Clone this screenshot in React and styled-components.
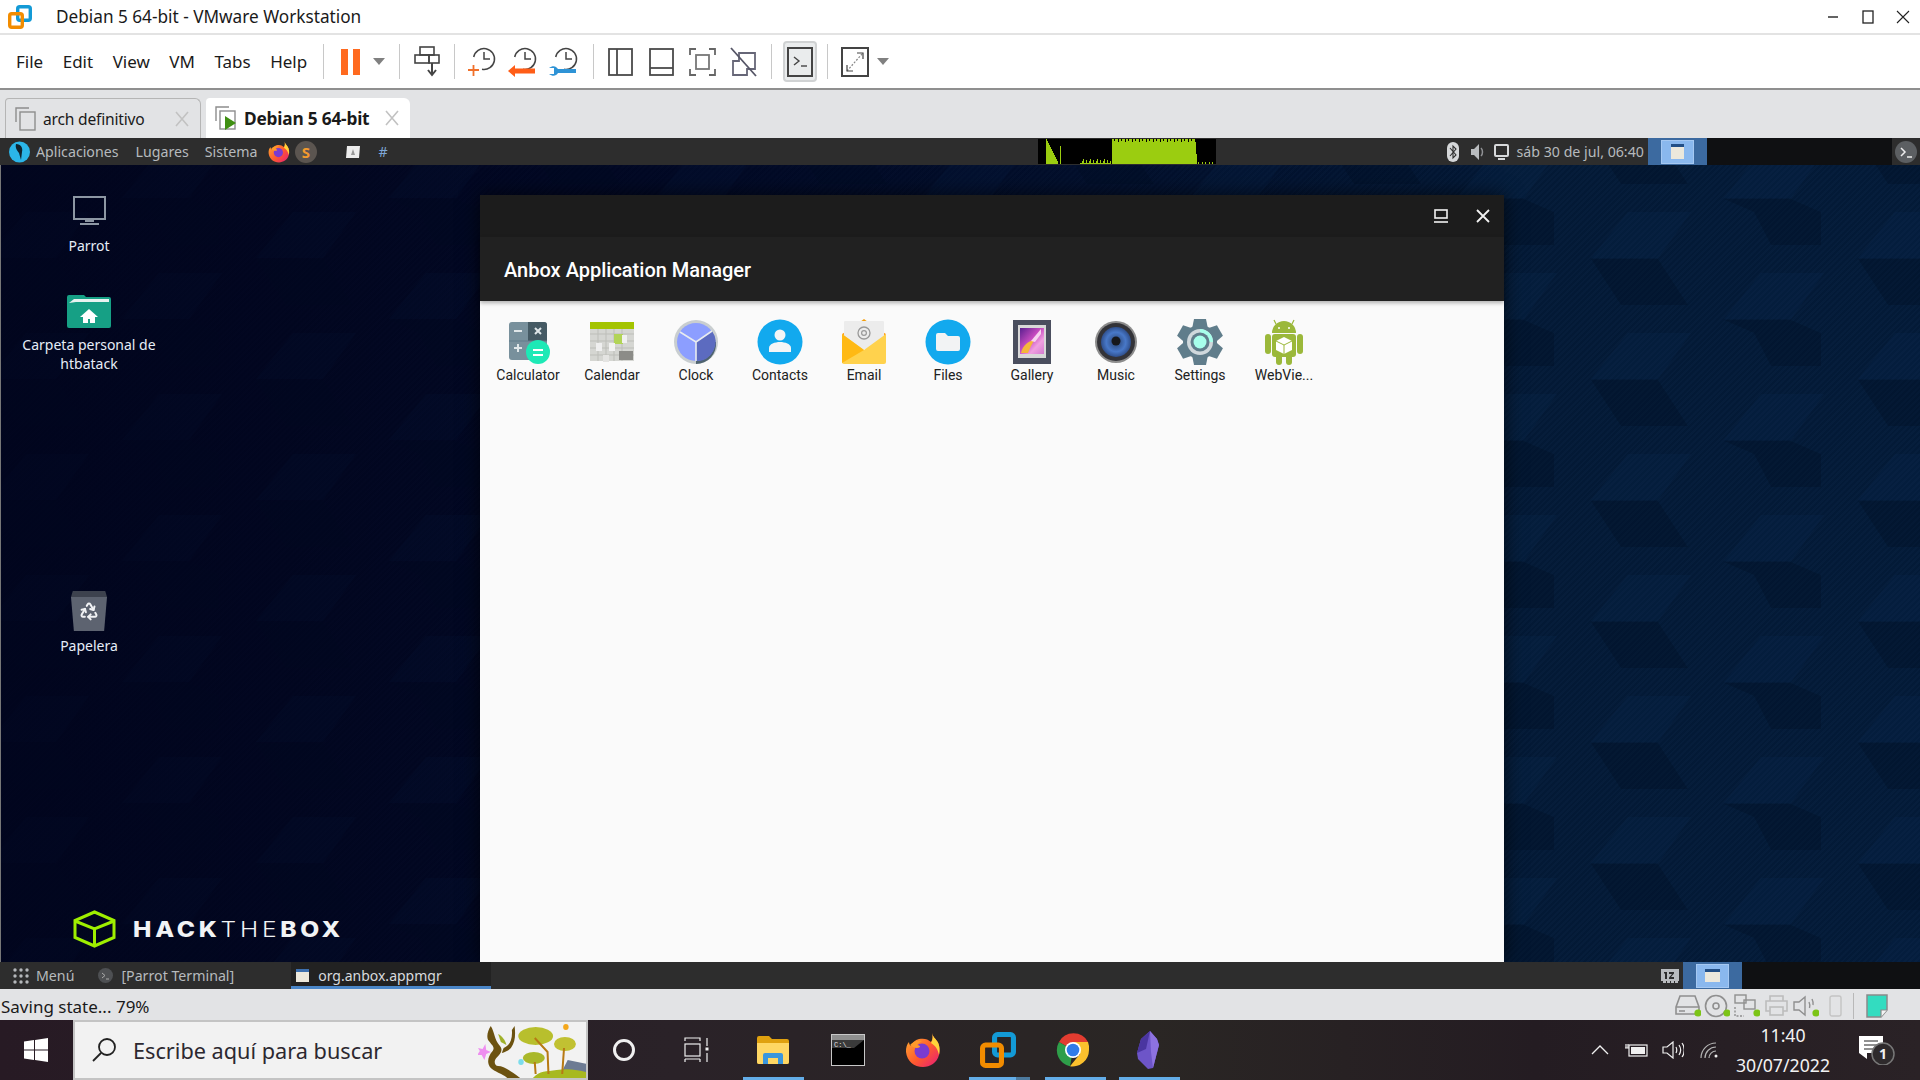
import styled, { createGlobalStyle } from "styled-components";
import { Recycle } from "lucide-react";

const GlobalStyle = createGlobalStyle`
  html, body {
    margin: 0;
    padding: 0;
    width: 1920px;
    height: 1080px;
    overflow: hidden;
    font-family: "Noto Sans", "Liberation Sans", sans-serif;
  }
  * { box-sizing: border-box; }
  svg { display: block; flex: none; }
`;

const Page = styled.div`
  width: 1920px;
  height: 1080px;
  display: flex;
  flex-direction: column;
  background: #e2e3e5;
`;

/* ---------- vmware chrome ---------- */

const TitleBar = styled.div`
  height: 35px;
  flex: none;
  display: flex;
  align-items: center;
  padding-left: 8px;
  background: #fff;
  border-bottom: 2px solid #e3e3e3;
`;

const TitleText = styled.span`
  margin-left: 24px;
  font-size: 17.2px;
  color: #1a1a1a;
  white-space: nowrap;
`;

const WinButtons = styled.div`
  margin-left: auto;
  display: flex;
`;

const WinButton = styled.div`
  width: 35px;
  height: 32px;
  display: flex;
  align-items: center;
  justify-content: center;
`;

const Toolbar = styled.div`
  height: 55px;
  flex: none;
  display: flex;
  align-items: center;
  background: #fff;
  border-bottom: 2px solid #8f8f8f;
`;

const MenuGroup = styled.div`
  width: 323px;
  padding-left: 16px;
  display: flex;
  gap: 19.5px;
  font-size: 17px;
  color: #1a1a1a;
`;

const Sep = styled.div`
  width: 1px;
  height: 35px;
  flex: none;
  background: #c8c8c8;
`;

const ToolGroup = styled.div`
  width: ${(p) => p.$w}px;
  flex: none;
  display: flex;
  align-items: center;
  justify-content: center;
  gap: ${(p) => p.$gap || 0}px;
`;

const ToolIcon = styled.div`
  width: ${(p) => p.$w || 41}px;
  height: 36px;
  display: flex;
  align-items: center;
  justify-content: center;
`;

const ActiveTool = styled.div`
  width: 34px;
  height: 41px;
  display: flex;
  align-items: center;
  justify-content: center;
  background: #eaeced;
  border: 2px solid #d0d2d3;
  border-radius: 4px;
`;

const DropArrow = styled.div`
  width: 0;
  height: 0;
  margin-left: ${(p) => p.$ml || 0}px;
  border-left: 6px solid transparent;
  border-right: 6px solid transparent;
  border-top: 7px solid #808080;
`;

const TabBar = styled.div`
  height: 48px;
  flex: none;
  display: flex;
  align-items: flex-end;
  gap: 5px;
  padding-left: 5px;
  background: #e2e3e5;
`;

const Tab = styled.div`
  width: ${(p) => p.$w}px;
  height: 40px;
  display: flex;
  align-items: center;
  padding-left: 8px;
  font-size: ${(p) => (p.$active ? 17.3 : 15.6)}px;
  font-weight: ${(p) => (p.$active ? 700 : 400)};
  color: #1a1a1a;
  background: ${(p) => (p.$active ? "#fff" : "#e2e3e5")};
  border: ${(p) => (p.$active ? "none" : "1px solid #b5b5b5")};
  border-bottom: none;
  border-radius: 4px 6px 0 0;
`;

const TabLabel = styled.span`
  margin-left: ${(p) => p.$ml}px;
  white-space: nowrap;
  letter-spacing: -0.2px;
`;

const TabClose = styled.div`
  margin-left: auto;
  margin-right: 10px;
`;

/* ---------- guest panels ---------- */

const GuestPanel = styled.div`
  height: ${(p) => p.$h}px;
  flex: none;
  display: flex;
  align-items: center;
  background: #2d2d2d;
  color: #b6babd;
  font-size: 14.2px;
  white-space: nowrap;
`;

const PanelItem = styled.div`
  margin-left: ${(p) => p.$ml || 0}px;
  display: flex;
  align-items: center;
  flex: none;
`;

const HashMark = styled.span`
  color: #7fa8d8;
`;

const Workspace = styled.div`
  height: 100%;
  flex: none;
  margin-left: ${(p) => p.$ml || 0}px;
  width: 59px;
  display: flex;
  align-items: center;
  justify-content: center;
  background: #3c6aa0;
`;

const WorkspaceThumb = styled.div`
  width: 33px;
  height: 24px;
  display: flex;
  align-items: center;
  justify-content: center;
  background: #8ab8ee;
  border: 1px solid #a5c8f2;
`;

const BlackArea = styled.div`
  height: 100%;
  flex: 1;
  display: flex;
  align-items: center;
  justify-content: flex-end;
  background: #0f1012;
`;

const TerminalDock = styled.div`
  width: 28px;
  height: 100%;
  display: flex;
  align-items: center;
  justify-content: center;
  background: #2d2d2d;
`;

const TaskEntry = styled.div`
  margin-left: 57px;
  width: 200px;
  height: 100%;
  display: flex;
  align-items: center;
  gap: 9px;
  padding: 3px 0 0 5px;
  font-size: 14px;
  color: #d8dade;
  background: #222;
  border-bottom: 3px solid #4a86c8;
`;

/* ---------- desktop ---------- */

const Desktop = styled.div`
  flex: 1;
  position: relative;
  overflow: hidden;
  border-left: 1px solid #777;
  background: repeating-linear-gradient(
      135deg,
      rgba(255, 255, 255, 0.012) 0 2px,
      rgba(0, 0, 0, 0.05) 2px 4px
    ),
    linear-gradient(90deg, #01051e 0%, #020b2a 30%, #031a38 80%, #031b3a 100%);
`;

const Wallpaper = styled.svg`
  position: absolute;
  inset: 0;
`;

const DesktopItem = styled.div`
  position: absolute;
  left: 13px;
  top: ${(p) => p.$top}px;
  width: 150px;
  display: flex;
  flex-direction: column;
  align-items: center;
`;

const DesktopLabel = styled.div`
  margin-top: ${(p) => p.$mt}px;
  font-size: 14px;
  line-height: 19px;
  text-align: center;
  color: #e6edf7;
`;

const TrashBin = styled.div`
  width: 36px;
  height: 40px;
  display: flex;
  align-items: center;
  justify-content: center;
  background: linear-gradient(#3d424e 0 6px, #5d6370 6px);
  clip-path: polygon(5% 0, 95% 0, 100% 15%, 92% 100%, 8% 100%, 0 15%);
`;

const HtbLogo = styled.div`
  position: absolute;
  left: 72px;
  top: 745px;
  display: flex;
  align-items: center;
  gap: 17px;
`;

const HtbText = styled.div`
  font-family: "Inter", sans-serif;
  font-size: 21px;
  font-weight: 800;
  letter-spacing: 3.2px;
  color: #f1f3f5;
  transform: scaleX(1.17);
  transform-origin: left center;
  span { font-weight: 300; }
`;

const AnboxWindow = styled.div`
  position: absolute;
  left: 479px;
  top: 30px;
  width: 1024px;
  bottom: 0;
  display: flex;
  flex-direction: column;
  background: #fafafa;
  box-shadow: 0 0 18px rgba(0, 0, 0, 0.65);
`;

const AnboxTitleBar = styled.div`
  height: 42px;
  display: flex;
  align-items: center;
  justify-content: flex-end;
  gap: 28px;
  padding-right: 14px;
  background: #1c1c1c;
`;

const AnboxActionBar = styled.div`
  height: 64px;
  display: flex;
  align-items: center;
  padding: 2px 24px 0;
  font-family: Roboto, sans-serif;
  font-size: 20px;
  font-weight: 500;
  color: #fff;
  background: #212121;
  box-shadow: 0 2px 4px rgba(0, 0, 0, 0.3);
  z-index: 1;
`;

const AppGrid = styled.div`
  display: flex;
  padding: 18px 0 0 6px;
`;

const AppCell = styled.div`
  width: 84px;
  display: flex;
  flex-direction: column;
  align-items: center;
`;

const AppLabel = styled.div`
  font-family: Roboto, sans-serif;
  font-size: 14px;
  line-height: 20px;
  color: #212121;
`;

/* ---------- status + windows taskbar ---------- */

const StatusBar = styled.div`
  height: 31px;
  flex: none;
  display: flex;
  align-items: center;
  padding: 3px 0 0 1px;
  font-size: 17px;
  color: #1a1a1a;
  background: #e2e3e5;
`;

const StatusIcons = styled.div`
  margin-left: auto;
  display: flex;
  align-items: center;
  padding-right: 32px;
`;

const StatusIcon = styled.div`
  width: 29.5px;
  display: flex;
  justify-content: center;
`;

const StatusSep = styled.div`
  width: 1px;
  height: 26px;
  margin: 0 12px 0 3px;
  background: #b8b8b8;
`;

const Taskbar = styled.div`
  height: 60px;
  flex: none;
  display: flex;
  align-items: center;
  color: #fff;
  background: linear-gradient(90deg, #271a24 0%, #2a2228 35%, #2a2624 60%, #241c22 80%, #2a2226 100%);
`;

const StartCell = styled.div`
  width: 73px;
  height: 100%;
  display: flex;
  align-items: center;
  justify-content: center;
  padding-right: 2px;
`;

const SearchBox = styled.div`
  width: 515px;
  height: 60px;
  position: relative;
  overflow: hidden;
  display: flex;
  align-items: center;
  padding-left: 16px;
  gap: 16px;
  font-size: 21.7px;
  color: #2c2830;
  background: #f2f2f2;
  border: 2px solid #c4c4c4;
`;

const SearchArt = styled.svg`
  position: absolute;
  right: 0;
  top: 0;
`;

const TaskCell = styled.div`
  width: ${(p) => p.$w}px;
  height: 100%;
  position: relative;
  display: flex;
  align-items: center;
  justify-content: center;
  &::after {
    content: "";
    display: ${(p) => (p.$open ? "block" : "none")};
    position: absolute;
    left: 9px;
    bottom: 0;
    width: ${(p) => (p.$stack ? 47 : 61)}px;
    height: 3px;
    background: #63ade8;
  }
  &::before {
    content: "";
    display: ${(p) => (p.$stack ? "block" : "none")};
    position: absolute;
    left: 56px;
    bottom: 0;
    width: 14px;
    height: 3px;
    background: #4d7a9e;
  }
`;

const Tray = styled.div`
  margin-left: auto;
  display: flex;
  align-items: center;
  height: 100%;
`;

const TrayIcon = styled.div`
  width: 36.5px;
  display: flex;
  justify-content: center;
`;

const TrayClock = styled.div`
  width: 110px;
  display: flex;
  flex-direction: column;
  align-items: center;
  gap: 6px;
  font-size: 17.7px;
  line-height: 24px;
  color: #f2f2f2;
`;

const NotifyCell = styled.div`
  width: 82px;
  display: flex;
  justify-content: center;
  padding-right: 4px;
`;

/* ---------- icons ---------- */

const VmwareLogo = ({ size = 24 }) => (
  <svg width={size} height={size} viewBox="0 0 24 24" fill="none">
    <rect x="9.7" y="1.7" width="12.6" height="13.6" rx="2" stroke="#139ad6" strokeWidth="3.4" />
    <rect x="1.7" y="8.7" width="12.6" height="13.6" rx="2" stroke="#f28c00" strokeWidth="3.4" />
  </svg>
);

const ClockBase = ({ children }) => (
  <svg width="36" height="36" viewBox="0 0 36 36" fill="none">
    <path d="M8.7 13A10.5 10.5 0 1 1 17 25.3" stroke="#444" strokeWidth="1.5" />
    <path d="M19 8v7h6" stroke="#444" strokeWidth="1.5" />
    {children}
  </svg>
);

const Panes = ({ children }) => (
  <svg width="28" height="30" viewBox="0 0 28 30" fill="none" stroke="#4a4a4a" strokeWidth="1.8">
    {children}
  </svg>
);

const TabPages = ({ play }) => (
  <svg width="26" height="26" viewBox="0 0 26 26" fill="none">
    <path d="M2 16V2h13" stroke="#8d8d8d" strokeWidth="1.4" />
    <rect x="6" y="6" width="15" height="18" stroke="#8d8d8d" strokeWidth="1.4" fill={play ? "#fff" : "none"} />
    {play && <path d="M11 11l11 7-11 7z" fill="#3f8f12" />}
  </svg>
);

const SmallX = () => (
  <svg width="16" height="16" viewBox="0 0 16 16" stroke="#c2c2c2" strokeWidth="1.6">
    <path d="M2 1l12 14M14 1L2 15" />
  </svg>
);

const FirefoxIcon = ({ size = 24 }) => (
  <svg width={size} height={size} viewBox="0 0 36 36">
    <defs>
      <linearGradient id={`ffx${size}`} x1="0" y1="0" x2="1" y2="1">
        <stop offset="0" stopColor="#ffb52e" />
        <stop offset="0.55" stopColor="#ff5a2e" />
        <stop offset="1" stopColor="#e5197c" />
      </linearGradient>
    </defs>
    <path d="M27 1c1 4 3 5 5 8 3 4 3 10 2 14-2 8-9 12-16 12C9 35 2 29 1 20c-.3-4 1-8 3-10 0 2 1 3 2 4 1-3 4-6 8-7 5-1 9 0 12 3 2-3 2-6 1-9z" fill={`url(#ffx${size})`} />
    <path d="M27 1c1 4 3 5 5 8 3 4 3 10 2 14-1-5-3-9-8-12 2-3 2-7 1-10z" fill="#ffd43a" />
    <circle cx="17" cy="19" r="7.5" fill="#7a3bd0" />
    <path d="M5 13c3-4 8-5 12-4-2 1-4 2-5 4 2 0 3 1 3 2-3 2-6 1-10-2z" fill="#ff9a2b" />
  </svg>
);

const ChromeIcon = () => (
  <svg width="34" height="34" viewBox="0 0 34 34">
    <path d="M17 17L3 9A16.5 16.5 0 0 1 32 9z" fill="#e23c30" />
    <path d="M17 17L3 9A16.5 16.5 0 0 0 14 33.3z" fill="#2e9e49" />
    <path d="M17 17h16A16.5 16.5 0 0 1 14 33.3L24 21z" fill="#fbc02d" />
    <path d="M17 9h15a16.5 16.5 0 0 1 1 8H22z" fill="#fbc02d" />
    <circle cx="17" cy="17" r="8" fill="#fff" />
    <circle cx="17" cy="17" r="6.3" fill="#2f7be8" />
  </svg>
);

const TreeArt = () => (
  <SearchArt width="108" height="56" viewBox="0 0 118 56" preserveAspectRatio="none">
    <path d="M88 56l10-18 22 4v14z" fill="#6d7b93" />
    <path d="M60 56c8-8 14-6 26-8s24 0 32 2v6z" fill="#a7b920" />
    <path d="M14 4c5 8 3 12 10 20 4 5 0 8-4 12-3 3-2 8 2 8 6 0 12 4 24 12h-14c-6-5-14-6-18-10-5-5-3-12 2-17 3-4-1-6-5-11-2-4 0-10 3-14z" fill="#6c5210" />
    <path d="M28 26c6-2 10-8 9-18l3-4c1 8 1 16-4 22-3 3-7 4-10 5z" fill="#6c5210" />
    <path d="M22 12c4 2 8 6 9 11l-6-3z" fill="#a0b12a" />
    <ellipse cx="63" cy="14" rx="19" ry="9" fill="#b8bf2d" />
    <ellipse cx="95" cy="22" rx="12" ry="7" fill="#c1c132" />
    <ellipse cx="61" cy="36" rx="12" ry="6" fill="#a9b82a" />
    <path d="M62 16l14 14 1 22M94 26l-2 26M62 40l1 12" stroke="#b77a14" strokeWidth="2.2" fill="none" />
    <circle cx="96" cy="5" r="3" fill="#f5a81c" />
    <circle cx="47" cy="40" r="3" fill="#7bdcec" />
    <path d="M0 26l5 1 3-5 1 6 5 2-5 2-2 6-3-5-5 0 3-4z" fill="#ee8ef0" />
  </SearchArt>
);

const StatusDot = () => <circle cx="23" cy="19" r="3.6" fill="#7cc416" stroke="none" />;

const AppIcons = {
  calculator: (
    <svg width="46" height="46" viewBox="0 0 46 46">
      <rect x="4" y="3" width="38" height="38" rx="3" fill="#78909c" />
      <path d="M23 3h16a3 3 0 0 1 3 3v16H23z" fill="#455a64" />
      <path d="M4 22h38" stroke="#607d8b" />
      <path d="M9 12h8M9 29h8M13 25v8" stroke="#dfe6e9" strokeWidth="2" />
      <path d="M30 9l6 6M36 9l-6 6" stroke="#dfe6e9" strokeWidth="2" />
      <circle cx="33" cy="33" r="12" fill="#1de9b6" />
      <path d="M28 31h10M28 36h10" stroke="#fff" strokeWidth="2" />
    </svg>
  ),
  calendar: (
    <svg width="46" height="46" viewBox="0 0 46 46">
      <rect x="1" y="3" width="44" height="39" fill="#d5d6d2" />
      <rect x="1" y="3" width="44" height="7" fill="#a4c400" />
      <path d="M1 15h44M1 22h44M1 29h44M1 36h44M9 10v32M17 10v32M25 10v32M33 10v32" stroke="#bdbeb9" />
      <rect x="25" y="15" width="9" height="10" fill="#b2d457" />
      <rect x="33" y="16" width="5" height="8" fill="#f0f0f0" />
      <rect x="7" y="24" width="6" height="8" fill="#efefef" />
      <rect x="20" y="24" width="6" height="8" fill="#f2f2f2" />
      <rect x="30" y="32" width="14" height="9" fill="#8c8c88" />
      <rect x="14" y="36" width="6" height="7" fill="#e4e4e2" />
    </svg>
  ),
  clock: (
    <svg width="46" height="46" viewBox="0 0 46 46">
      <circle cx="23" cy="23" r="22" fill="#c9ced0" />
      <path d="M43 23a20 20 0 0 1-20 22v-4a18 18 0 0 0 18-18z" fill="#4f6470" />
      <circle cx="23" cy="23" r="19" fill="#8c9eff" />
      <path d="M23 23L39 12A19 19 0 0 1 23 42z" fill="#5c6bc0" />
      <path d="M7 13l16 10 16-11M23 23v19" stroke="#e8ebef" strokeWidth="1.6" fill="none" />
    </svg>
  ),
  contacts: (
    <svg width="46" height="46" viewBox="0 0 46 46">
      <circle cx="23" cy="23" r="22.5" fill="#12a9ee" />
      <circle cx="23" cy="16" r="5.5" fill="#f4f5f6" />
      <path d="M12 33v-4c0-4 6-6 11-6s11 2 11 6v4z" fill="#f4f5f6" />
    </svg>
  ),
  email: (
    <svg width="46" height="46" viewBox="0 0 46 46">
      <path d="M23 0l4 3h-8z" fill="#f59e0b" />
      <path d="M1 15l5-3v10zM45 15l-5-3v10z" fill="#ff9f1c" />
      <rect x="3" y="2" width="40" height="28" rx="1" fill="#ececec" />
      <circle cx="23" cy="14" r="6" fill="none" stroke="#999" strokeWidth="1.3" />
      <circle cx="23" cy="14" r="2.4" fill="none" stroke="#999" strokeWidth="1.2" />
      <path d="M1 15l22 16 22-16v28a2 2 0 0 1-2 2H3a2 2 0 0 1-2-2z" fill="#ffd24d" />
      <path d="M1 15l22 16L1 44z" fill="#ffb914" />
    </svg>
  ),
  files: (
    <svg width="46" height="46" viewBox="0 0 46 46">
      <ellipse cx="23" cy="23" rx="22.5" ry="22.5" fill="#12a9ee" />
      <path d="M11 16a2 2 0 0 1 2-2h7l3 3h10a2 2 0 0 1 2 2v11a2 2 0 0 1-2 2H13a2 2 0 0 1-2-2z" fill="#f2f3f4" />
    </svg>
  ),
  gallery: (
    <svg width="46" height="46" viewBox="0 0 46 46">
      <defs>
        <linearGradient id="galleryFill" x1="0" y1="0" x2="1" y2="1">
          <stop offset="0" stopColor="#5a1f8f" />
          <stop offset="0.45" stopColor="#c84cc0" />
          <stop offset="0.7" stopColor="#f0a0e0" />
          <stop offset="1" stopColor="#d47ad0" />
        </linearGradient>
      </defs>
      <rect x="4" y="1" width="38" height="44" fill="#4a4e5e" />
      <rect x="9" y="6" width="28" height="33" fill="#d8d8d8" />
      <rect x="11" y="9" width="24" height="26" fill="url(#galleryFill)" />
      <path d="M12 34c2-8 7-12 14-13-3 3-5 8-7 13z" fill="#f5b63a" />
      <path d="M22 22l10-12v5l-6 8z" fill="#f7d3ef" />
    </svg>
  ),
  music: (
    <svg width="46" height="46" viewBox="0 0 46 46">
      <defs>
        <radialGradient id="cone">
          <stop offset="0" stopColor="#27406e" />
          <stop offset="0.65" stopColor="#4878c8" />
          <stop offset="1" stopColor="#2f4f8c" />
        </radialGradient>
      </defs>
      <circle cx="23" cy="23" r="21" fill="#8c8c8c" />
      <circle cx="23" cy="23" r="19" fill="#333338" />
      <circle cx="23" cy="23" r="15" fill="url(#cone)" />
      <circle cx="23" cy="22" r="4.5" fill="#16171b" />
    </svg>
  ),
  settings: (
    <svg width="46" height="46" viewBox="0 0 46 46">
      <g fill="#607d8b">
        <circle cx="23" cy="23" r="17" />
        {[0, 60, 120, 180, 240, 300].map((a) => (
          <path key={a} d="M17 0h12l2 10H15z" transform={`rotate(${a} 23 23)`} />
        ))}
      </g>
      <circle cx="23" cy="23" r="13" fill="#cfd8dc" />
      <path d="M23 10a13 13 0 0 1 13 13h-4a9 9 0 0 0-9-9z" fill="#a7ffeb" />
      <circle cx="23" cy="23" r="9.5" fill="#607d8b" />
      <circle cx="23" cy="23" r="6.5" fill="#a7ffeb" />
    </svg>
  ),
  webview: (
    <svg width="46" height="46" viewBox="0 0 46 46">
      <g fill="#9bb83a">
        <path d="M11 14a12 12 0 0 1 24 0z" />
        <rect x="11" y="15" width="24" height="23" rx="3" />
        <rect x="4" y="15" width="6" height="20" rx="3" />
        <rect x="36" y="15" width="6" height="20" rx="3" />
        <rect x="15" y="34" width="6" height="12" rx="3" />
        <rect x="25" y="34" width="6" height="12" rx="3" />
      </g>
      <path d="M15 5l-2-4M31 5l2-4" stroke="#9bb83a" strokeWidth="1.2" />
      <circle cx="18" cy="9" r="1" fill="#fff" />
      <circle cx="28" cy="9" r="1" fill="#fff" />
      <path d="M23 18l8 4v9l-8 4-8-4v-9z" fill="#fff" />
      <path d="M23 26l8-4M23 26l-8-4M23 26v9" stroke="#9bb83a" strokeWidth="1" />
    </svg>
  ),
};

const apps = [
  ["calculator", "Calculator"],
  ["calendar", "Calendar"],
  ["clock", "Clock"],
  ["contacts", "Contacts"],
  ["email", "Email"],
  ["files", "Files"],
  ["gallery", "Gallery"],
  ["music", "Music"],
  ["settings", "Settings"],
  ["webview", "WebVie..."],
];

// system monitor bars, same shape as the panel applet
const graphBars = Array.from({ length: 178 }, (_, i) => {
  const noise = (i * 37) % 7;
  if (i < 8) return 0;
  if (i < 20) return 25 - (i - 8) * 2;
  if (i === 22) return 18;
  if (i >= 42 && i < 73) return noise > 3 ? noise - 1 : 1;
  if (i >= 74 && i < 158) return 25 - (noise > 4 ? noise - 3 : 0);
  if (i === 158) return 10;
  if (i >= 160) return noise > 4 ? 2 : 0;
  return 0;
});

const App = () => (
  <Page>
    <GlobalStyle />

    <TitleBar>
      <VmwareLogo />
      <TitleText>Debian 5 64-bit - VMware Workstation</TitleText>
      <WinButtons>
        <WinButton>
          <svg width="12" height="12" viewBox="0 0 12 12"><path d="M1 6h10" stroke="#222" strokeWidth="1.4" /></svg>
        </WinButton>
        <WinButton>
          <svg width="12" height="14" viewBox="0 0 12 14"><rect x="1" y="1" width="10" height="12" fill="none" stroke="#222" strokeWidth="1.3" /></svg>
        </WinButton>
        <WinButton>
          <svg width="14" height="14" viewBox="0 0 14 14"><path d="M1 1l12 12M13 1L1 13" stroke="#222" strokeWidth="1.1" /></svg>
        </WinButton>
      </WinButtons>
    </TitleBar>

    <Toolbar>
      <MenuGroup>
        <span>File</span>
        <span>Edit</span>
        <span>View</span>
        <span>VM</span>
        <span>Tabs</span>
        <span>Help</span>
      </MenuGroup>
      <Sep />
      <ToolGroup $w={75}>
        <svg width="22" height="26" viewBox="0 0 22 26">
          <rect x="2" y="0" width="7" height="26" fill="#ff6a1f" />
          <rect x="14" y="0" width="7" height="26" fill="#ff6a1f" />
        </svg>
        <DropArrow $ml={12} />
      </ToolGroup>
      <Sep />
      <ToolGroup $w={54}>
        <svg width="26" height="32" viewBox="0 0 26 32" fill="none" stroke="#444" strokeWidth="1.6">
          <rect x="6" y="1" width="14" height="8" />
          <rect x="1" y="9" width="14" height="8" />
          <rect x="15" y="9" width="10" height="8" />
          <path d="M18 17v11M14 24l4 5 4-5" strokeWidth="2" />
        </svg>
      </ToolGroup>
      <Sep />
      <ToolGroup $w={138}>
        <ToolIcon>
          <ClockBase>
            <path d="M3 26h11M8.5 21v11" stroke="#f0702a" strokeWidth="1.8" />
          </ClockBase>
        </ToolIcon>
        <ToolIcon>
          <ClockBase>
            <path d="M2 27l7-6v3.5h20v5H9V33z" fill="#ff5d17" />
          </ClockBase>
        </ToolIcon>
        <ToolIcon>
          <ClockBase>
            <path d="M2 24c4-3 7-2 9 1h18v4H11c-2 3-5 4-9 1h5v-6z" fill="#2e93d6" />
          </ClockBase>
        </ToolIcon>
      </ToolGroup>
      <Sep />
      <ToolGroup $w={177}>
        <ToolIcon>
          <Panes>
            <rect x="2" y="2" width="23" height="26" />
            <path d="M10 2v26" />
          </Panes>
        </ToolIcon>
        <ToolIcon>
          <Panes>
            <rect x="2" y="2" width="23" height="26" />
            <path d="M2 21h23" />
          </Panes>
        </ToolIcon>
        <ToolIcon>
          <Panes>
            <path d="M1 8V2h6M20 2h6v6M26 22v6h-6M7 28H1v-6" stroke="#666" />
            <rect x="7" y="8" width="13" height="14" stroke="#777" />
          </Panes>
        </ToolIcon>
        <ToolIcon>
          <Panes>
            <path d="M9 6h16v16h-8v6H3V14h6z" stroke="#667" />
            <path d="M1 1l25 28" stroke="#556" />
          </Panes>
        </ToolIcon>
      </ToolGroup>
      <Sep />
      <ToolGroup $w={55}>
        <ActiveTool>
          <svg width="26" height="30" viewBox="0 0 26 30" fill="none" stroke="#444" strokeWidth="2">
            <rect x="1" y="1" width="24" height="28" />
            <path d="M7 10l5 4-5 4" strokeWidth="1.4" />
            <path d="M14 19h6" strokeWidth="1.4" />
          </svg>
        </ActiveTool>
      </ToolGroup>
      <Sep />
      <ToolGroup $w={74} $gap={8}>
        <svg width="28" height="30" viewBox="0 0 28 30" fill="none" stroke="#444" strokeWidth="2">
          <rect x="1" y="1" width="26" height="28" />
          <path d="M6 24l15-17" stroke="#888" strokeWidth="1.2" strokeDasharray="2 1.5" />
          <path d="M16 6h6v6M6 18v6h6" strokeWidth="1.2" />
        </svg>
        <DropArrow />
      </ToolGroup>
    </Toolbar>

    <TabBar>
      <Tab $w={196}>
        <TabPages />
        <TabLabel $ml={3}>arch definitivo</TabLabel>
        <TabClose><SmallX /></TabClose>
      </Tab>
      <Tab $w={204} $active>
        <TabPages play />
        <TabLabel $ml={4}>Debian 5 64-bit</TabLabel>
        <TabClose><SmallX /></TabClose>
      </Tab>
    </TabBar>

    <GuestPanel $h={27}>
      <PanelItem $ml={9}>
        <svg width="21" height="22" viewBox="0 0 21 22">
          <circle cx="10.5" cy="11" r="10.5" fill="#2bb5e8" />
          <path d="M7 3c5 0 7 4 6 8l-1 8-2-7C8 9 6 7 7 3z" fill="#10232e" />
        </svg>
      </PanelItem>
      <PanelItem $ml={6}>Aplicaciones</PanelItem>
      <PanelItem $ml={17}>Lugares</PanelItem>
      <PanelItem $ml={16}>Sistema</PanelItem>
      <PanelItem $ml={11}><FirefoxIcon size={22} /></PanelItem>
      <PanelItem $ml={5}>
        <svg width="22" height="22" viewBox="0 0 22 22">
          <circle cx="11" cy="11" r="11" fill="#5b5550" />
          <text x="11" y="16.5" textAnchor="middle" fontSize="15" fontWeight="700" fill="#f29a2e" fontFamily="Noto Sans">S</text>
        </svg>
      </PanelItem>
      <PanelItem $ml={28}>
        <svg width="16" height="16" viewBox="0 0 16 16">
          <path d="M2 2h13l-1 12H1z" fill="#ececec" />
          <path d="M8 5l2 6H6z" fill="#999" />
        </svg>
      </PanelItem>
      <PanelItem $ml={17}>
        <HashMark>#</HashMark>
      </PanelItem>
      <PanelItem $ml={650}>
        <svg width="178" height="25" viewBox="0 0 178 25" shapeRendering="crispEdges">
          <rect width="178" height="25" fill="#000" />
          {graphBars.map((h, i) =>
            h > 0 ? <rect key={i} x={i} y={25 - h} width="1" height={h} fill="#9bcd10" /> : null
          )}
        </svg>
      </PanelItem>
      <PanelItem $ml={231}>
        <svg width="12" height="20" viewBox="0 0 12 20">
          <rect width="12" height="20" rx="6" fill="#d5d7d9" />
          <path d="M3 6l6 7-3 3V4l3 3-6 7" stroke="#2d2d2d" strokeWidth="1.1" fill="none" />
        </svg>
      </PanelItem>
      <PanelItem $ml={11}>
        <svg width="15" height="18" viewBox="0 0 15 18">
          <path d="M1 6h3l5-5v16l-5-5H1z" fill="#b8bbbe" />
          <path d="M11 5c2 2 2 6 0 8" stroke="#8f9194" strokeWidth="1.5" fill="none" />
        </svg>
      </PanelItem>
      <PanelItem $ml={9}>
        <svg width="15" height="16" viewBox="0 0 15 16" fill="none" stroke="#d6d8da" strokeWidth="2">
          <rect x="1" y="1" width="13" height="11" rx="1" />
          <path d="M4 15h7" />
        </svg>
      </PanelItem>
      <PanelItem $ml={8}>sáb 30 de jul, 06:40</PanelItem>
      <Workspace $ml={4}>
        <WorkspaceThumb>
          <svg width="13" height="15" viewBox="0 0 13 15">
            <rect width="13" height="15" fill="#ece8dc" />
            <rect width="13" height="3" fill="#234f86" />
          </svg>
        </WorkspaceThumb>
      </Workspace>
      <BlackArea>
        <TerminalDock>
          <svg width="22" height="22" viewBox="0 0 22 22">
            <circle cx="11" cy="11" r="11" fill="#5c5f62" />
            <path d="M6 7l4 4-4 4" stroke="#eee" strokeWidth="1.5" fill="none" />
            <path d="M12 16h5" stroke="#eee" strokeWidth="1.5" />
          </svg>
        </TerminalDock>
      </BlackArea>
    </GuestPanel>

    <Desktop>
      <Wallpaper width="1920" height="797">
        <defs>
          <pattern id="hexes" width="267" height="121" patternUnits="userSpaceOnUse" x="1590" y="47">
            <polygon points="0,46 67,46 100,0 37,0" fill="#0a2b52" opacity="0.22" />
            <polygon points="0,47 67,47 97,93 30,93" fill="#010c20" opacity="0.3" />
            <polygon points="133,107 200,107 233,61 170,61" fill="#0a2b52" opacity="0.22" />
            <polygon points="133,108 200,108 230,121 163,121" fill="#010c20" opacity="0.3" />
            <polygon points="163,0 230,0 230,33 180,33" fill="#010c20" opacity="0.3" />
          </pattern>
          <linearGradient id="fade" x1="0" x2="1" y1="0" y2="0">
            <stop offset="0" stopColor="#01051e" stopOpacity="0.85" />
            <stop offset="0.25" stopColor="#01051e" stopOpacity="0.55" />
            <stop offset="0.8" stopColor="#01051e" stopOpacity="0" />
          </linearGradient>
        </defs>
        <rect width="1920" height="797" fill="url(#hexes)" />
        <rect width="1920" height="797" fill="url(#fade)" />
      </Wallpaper>

      <DesktopItem $top={31}>
        <svg width="33" height="30" viewBox="0 0 33 30" fill="none">
          <rect x="1" y="1" width="31" height="22" stroke="#8d97a3" strokeWidth="2" />
          <path d="M12 24h9v2h-9zM7 27h19v2H7z" fill="#8d97a3" />
        </svg>
        <DesktopLabel $mt={10}>Parrot</DesktopLabel>
      </DesktopItem>

      <DesktopItem $top={130}>
        <svg width="44" height="33" viewBox="0 0 44 33">
          <path d="M0 2a2 2 0 0 1 2-2h15l2 2h23a2 2 0 0 1 2 2v27a2 2 0 0 1-2 2H2a2 2 0 0 1-2-2z" fill="#16a085" />
          <path d="M2 8l5-4h35v3H9z" fill="#e8f3f0" />
          <path d="M22 14l-9 8h3v6h5v-4h2v4h5v-6h3z" fill="#fff" />
        </svg>
        <DesktopLabel $mt={7}>Carpeta personal de<br />htbatack</DesktopLabel>
      </DesktopItem>

      <DesktopItem $top={426}>
        <TrashBin>
          <Recycle size={20} color="#f1f2f4" strokeWidth={2.4} />
        </TrashBin>
        <DesktopLabel $mt={5}>Papelera</DesktopLabel>
      </DesktopItem>

      <HtbLogo>
        <svg width="43" height="38" viewBox="0 0 43 38" fill="none" stroke="#9fef00" strokeWidth="3">
          <path d="M21.5 2L41 10.5v17L21.5 36 2 27.5v-17z" />
          <path d="M2 11l19.5 8L41 11M21.5 19v17" />
        </svg>
        <HtbText>HACK<span>THE</span>BOX</HtbText>
      </HtbLogo>

      <AnboxWindow>
        <AnboxTitleBar>
          <svg width="14" height="14" viewBox="0 0 14 14" fill="none" stroke="#f2f2f2" strokeWidth="1.6">
            <rect x="1" y="1" width="12" height="8" />
            <path d="M0 13h14" />
          </svg>
          <svg width="14" height="14" viewBox="0 0 14 14" stroke="#f2f2f2" strokeWidth="1.8">
            <path d="M1 1l12 12M13 1L1 13" />
          </svg>
        </AnboxTitleBar>
        <AnboxActionBar>Anbox Application Manager</AnboxActionBar>
        <AppGrid>
          {apps.map(([key, label]) => (
            <AppCell key={key}>
              {AppIcons[key]}
              <AppLabel>{label}</AppLabel>
            </AppCell>
          ))}
        </AppGrid>
      </AnboxWindow>
    </Desktop>

    <GuestPanel $h={27}>
      <PanelItem $ml={13}>
        <svg width="16" height="16" viewBox="0 0 16 16" fill="#b4b7ba">
          {[1, 7, 13].flatMap((y) =>
            [1, 7, 13].map((x) => <circle key={`${x}-${y}`} cx={x + 1} cy={y + 1} r="1.7" />)
          )}
        </svg>
      </PanelItem>
      <PanelItem $ml={7}>Menú</PanelItem>
      <PanelItem $ml={24}>
        <svg width="15" height="15" viewBox="0 0 15 15">
          <circle cx="7.5" cy="7.5" r="7.5" fill="#4e5053" />
          <path d="M4 5l3 2.5L4 10M8 11h3" stroke="#aaa" strokeWidth="1" fill="none" />
        </svg>
      </PanelItem>
      <PanelItem $ml={8}>[Parrot Terminal]</PanelItem>
      <TaskEntry>
        <svg width="13" height="13" viewBox="0 0 13 13">
          <rect width="13" height="13" fill="#ece8dc" />
          <rect width="13" height="3" fill="#3d6fae" />
        </svg>
        org.anbox.appmgr
      </TaskEntry>
      <PanelItem $ml={1170}>
        <svg width="18" height="16" viewBox="0 0 18 16" fill="#b9bcbf">
          <path d="M0 1h18v12h-1v2h-3v-2h-1v2h-3v-2H9v2H6v-2H5v2H2v-2H0z" />
          <path d="M3 4h3v7H4V5.5H3zM8 4h5v1.5L10 9h3v2H8V9.5L11 6H8z" fill="#2d2d2d" />
        </svg>
      </PanelItem>
      <Workspace $ml={4}>
        <WorkspaceThumb>
          <svg width="15" height="13" viewBox="0 0 15 13">
            <rect width="15" height="13" fill="#ece8dc" />
            <rect width="15" height="3" fill="#234f86" />
          </svg>
        </WorkspaceThumb>
      </Workspace>
      <BlackArea />
    </GuestPanel>

    <StatusBar>
      Saving state... 79%
      <StatusIcons>
        <StatusIcon>
          <svg width="26" height="24" viewBox="0 0 26 24" fill="none" stroke="#8f8f8f" strokeWidth="1.6">
            <path d="M1 13L5 2h15l4 11v7H1zM1 13h23M4 17h6" />
            <StatusDot />
          </svg>
        </StatusIcon>
        <StatusIcon>
          <svg width="26" height="24" viewBox="0 0 26 24" fill="none" stroke="#8f8f8f" strokeWidth="1.6">
            <circle cx="12" cy="12" r="10.5" />
            <circle cx="12" cy="12" r="3" />
            <StatusDot />
          </svg>
        </StatusIcon>
        <StatusIcon>
          <svg width="26" height="24" viewBox="0 0 26 24" fill="none" stroke="#8f8f8f" strokeWidth="1.4">
            <rect x="1" y="1" width="11" height="8" />
            <rect x="10" y="6" width="11" height="9" />
            <path d="M1 13v9h9" strokeDasharray="2 1.5" />
            <StatusDot />
          </svg>
        </StatusIcon>
        <StatusIcon>
          <svg width="23" height="22" viewBox="0 0 23 22" fill="none" stroke="#bcbcbc" strokeWidth="1.6">
            <path d="M5 6V1h13v5M5 16H1V6h21v10h-4" />
            <rect x="5" y="12" width="13" height="8" />
          </svg>
        </StatusIcon>
        <StatusIcon>
          <svg width="26" height="24" viewBox="0 0 26 24" fill="none" stroke="#8f8f8f" strokeWidth="1.4">
            <path d="M1 8h5l6-5v18l-6-5H1zM16 8c1 2 1 4 .5 6M19 5c1 2 1.5 4 1 6" />
            <StatusDot />
          </svg>
        </StatusIcon>
        <StatusIcon>
          <svg width="13" height="22" viewBox="0 0 13 22" fill="none" stroke="#c4c4c4" strokeWidth="1.4">
            <rect x="1" y="1" width="11" height="20" rx="2" />
          </svg>
        </StatusIcon>
        <StatusSep />
        <svg width="22" height="24" viewBox="0 0 22 24">
          <path d="M1 1h20v15l-6 7H1z" fill="#33dcc0" stroke="#8a8a8a" strokeWidth="1.5" />
          <path d="M15 23v-7h6" fill="#f4f4f4" stroke="#8a8a8a" strokeWidth="1.2" />
        </svg>
      </StatusIcons>
    </StatusBar>

    <Taskbar>
      <StartCell>
        <svg width="24" height="24" viewBox="0 0 24 24" fill="#fff">
          <path d="M0 3.5l10-1.4V11.5H0zM11 2l13-2v11.5H11zM0 12.5h10v9.4L0 20.5zM11 12.5h13V24l-13-2z" />
        </svg>
      </StartCell>
      <SearchBox>
        <svg width="26" height="26" viewBox="0 0 26 26" fill="none" stroke="#222" strokeWidth="1.8">
          <circle cx="16" cy="10" r="8" />
          <path d="M10 16L2 24" />
        </svg>
        Escribe aquí para buscar
        <TreeArt />
      </SearchBox>
      <TaskCell $w={72}>
        <svg width="24" height="24" viewBox="0 0 24 24" fill="none">
          <circle cx="12" cy="12" r="9.5" stroke="#f0f0f0" strokeWidth="3" />
        </svg>
      </TaskCell>
      <TaskCell $w={74}>
        <svg width="26" height="26" viewBox="0 0 26 26" fill="none" stroke="#f0f0f0" strokeWidth="1.2">
          <path d="M1 4V1h15v3M1 22v3M16 22v3M1 22h15" />
          <rect x="1" y="7" width="15" height="12" />
          <path d="M23 1v8M23 16v9" />
          <rect x="21.5" y="10.5" width="3" height="3" fill="#f0f0f0" stroke="none" />
        </svg>
      </TaskCell>
      <TaskCell $w={77} $open>
        <svg width="32" height="32" viewBox="0 0 32 32">
          <path d="M0 4a2 2 0 0 1 2-2h10l3 3h15a2 2 0 0 1 2 2v21a2 2 0 0 1-2 2H2a2 2 0 0 1-2-2z" fill="#e0a10f" />
          <path d="M0 9h32v19a2 2 0 0 1-2 2H2a2 2 0 0 1-2-2z" fill="#ffd764" />
          <path d="M6 30V21a2 2 0 0 1 2-2h16a2 2 0 0 1 2 2v9h-5v-6H11v6z" fill="#3a96dd" />
        </svg>
      </TaskCell>
      <TaskCell $w={74}>
        <svg width="34" height="32" viewBox="0 0 34 32">
          <rect x="0.5" y="0.5" width="33" height="31" fill="#000" stroke="#c8c8c8" />
          <rect x="1" y="1" width="32" height="5" fill="#8f8f8f" />
          <path d="M1 6h32l-10 8H1z" fill="#3a3a3a" />
          <text x="3" y="13" fontSize="7" fill="#e0e0e0" fontFamily="Liberation Mono">C:\_</text>
        </svg>
      </TaskCell>
      <TaskCell $w={75}>
        <FirefoxIcon size={36} />
      </TaskCell>
      <TaskCell $w={76} $open $stack>
        <VmwareLogo size={36} />
      </TaskCell>
      <TaskCell $w={74} $open>
        <ChromeIcon />
      </TaskCell>
      <TaskCell $w={76} $open>
        <svg width="24" height="38" viewBox="0 0 24 38">
          <path d="M14 0l7 8 2 6-6 23-5 1L2 28l-1-6L5 8z" fill="#6d55c8" />
          <path d="M14 0l7 8 2 6-6 23-2-16z" fill="#8d72e0" />
          <path d="M5 8l9-8-4 18-9 4z" fill="#4a35a0" />
        </svg>
      </TaskCell>
      <Tray>
        <TrayIcon>
          <svg width="18" height="10" viewBox="0 0 18 10" fill="none" stroke="#f0f0f0" strokeWidth="1.3">
            <path d="M1 9l8-8 8 8" />
          </svg>
        </TrayIcon>
        <TrayIcon>
          <svg width="24" height="16" viewBox="0 0 24 16" fill="none" stroke="#f0f0f0" strokeWidth="1.2">
            <rect x="4" y="3" width="18" height="11" />
            <rect x="6" y="5" width="14" height="7" fill="#f0f0f0" stroke="none" />
            <path d="M0 6h4M1 2v4M3 2v4" />
          </svg>
        </TrayIcon>
        <TrayIcon>
          <svg width="22" height="18" viewBox="0 0 22 18" fill="none" stroke="#f0f0f0" strokeWidth="1.2">
            <path d="M1 6h4l6-5v16l-6-5H1zM14 6c1 2 1 4 0 6M17 4c2 3 2 7 0 10M20 2c3 4 3 10 0 14" />
          </svg>
        </TrayIcon>
        <TrayIcon>
          <svg width="20" height="18" viewBox="0 0 20 18" fill="none" stroke="#b4b4b4" strokeWidth="1.2">
            <path d="M1 17A15 15 0 0 1 16 2M5 17A11 11 0 0 1 16 6M9 17a7 7 0 0 1 7-7" />
            <circle cx="16" cy="15" r="1.5" fill="#f0f0f0" stroke="none" />
          </svg>
        </TrayIcon>
        <TrayClock>
          <span>11:40</span>
          <span>30/07/2022</span>
        </TrayClock>
        <NotifyCell>
          <svg width="36" height="30" viewBox="0 0 36 30">
            <path d="M0 1h24v17H8v6l-8-6z" fill="#fff" />
            <path d="M5 6h14M5 10h14M5 14h10" stroke="#222" strokeWidth="1.2" />
            <circle cx="24" cy="19" r="11" fill="#2e2a2c" stroke="#777" strokeWidth="1.5" />
            <text x="24" y="24" textAnchor="middle" fontSize="14" fontWeight="700" fill="#f0f0f0" fontFamily="Noto Sans">1</text>
          </svg>
        </NotifyCell>
      </Tray>
    </Taskbar>
  </Page>
);

export default App;
